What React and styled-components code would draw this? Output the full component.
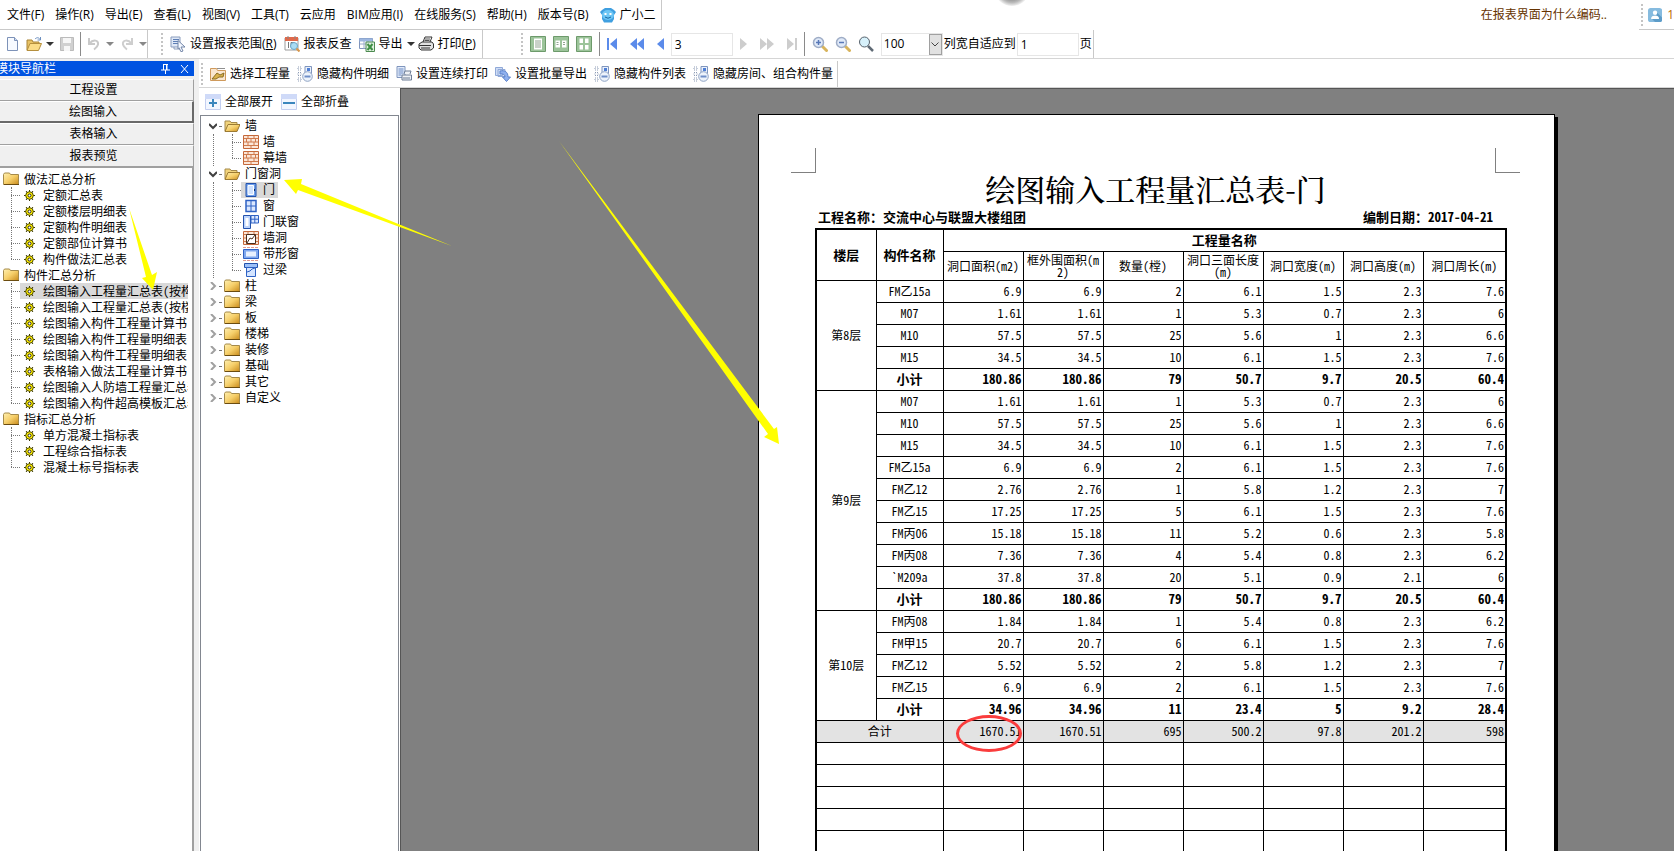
import React from 'react';
import styled, { createGlobalStyle, css } from 'styled-components';

const UI_FONT = '"Open Sans", "Noto Sans CJK SC", sans-serif';
const DOC_FONT = '"Noto Sans Mono CJK SC", "Noto Sans CJK SC", monospace';
const TITLE_FONT = '"Noto Serif CJK SC", "Noto Sans Mono CJK SC", "Noto Sans CJK SC", serif';

const GlobalStyle = createGlobalStyle`
  * { box-sizing: border-box; }
  body { margin: 0; background: #fff; color: #000; font: 12px/16px ${UI_FONT}; }
  button, input, select { font: inherit; color: inherit; }
  ul { margin: 0; padding: 0; list-style: none; }
`;

/* ---------- shell ---------- */

const Shell = styled.div`
  position: relative;
  display: flex;
  flex-direction: column;
  height: 100vh;
  overflow: hidden;
`;

const MenuRow = styled.header`
  position: relative;
  display: flex;
  justify-content: space-between;
  height: 30px;
`;

const MenuBar = styled.nav`
  display: flex;
  align-items: center;
  gap: 11px;
  padding: 0 5px 0 7px;
  border-right: 1px solid #c9c9c9;
  border-bottom: 1px solid #c9c9c9;
`;

const MenuButton = styled.button`
  display: flex;
  align-items: center;
  gap: 4px;
  padding: 0;
  border: 0;
  background: none;
  white-space: nowrap;
`;

const MenuRight = styled.div`
  display: flex;
  gap: 32px;
`;

const Hint = styled.a`
  padding-top: 7px;
  color: #663300;
  text-decoration: none;
  white-space: nowrap;
`;

const Account = styled.div`
  display: flex;
  align-items: center;
  gap: 5px;
  width: 35px;
  padding-left: 2px;
  border-bottom: 1px solid #c9c9c9;
  color: #b86a00;
  overflow: hidden;
`;

const Blob = styled.span`
  position: absolute;
  left: 60%;
  top: -28px;
  width: 36px;
  height: 34px;
  margin-left: -10px;
  border-radius: 50%;
  background: radial-gradient(circle, #777 30%, #bbb 55%, #fff 72%);
`;

const ToolRow = styled.div`
  display: flex;
  height: 29px;
  flex: none;
  border-bottom: 1px solid #d5d5d5;
`;

const ReportToolRow = styled(ToolRow)`
  padding-top: 2px;
`;

const ToolGroup = styled.div`
  display: flex;
  align-items: center;
  padding-left: ${p => p.$start || 0}px;
  padding-right: ${p => p.$end || 0}px;
  gap: ${p => p.$gap || 0}px;
  border-right: 1px solid #c9c9c9;
  margin-right: ${p => p.$after || 0}px;
`;

const ToolCluster = styled.div`
  display: flex;
  align-items: center;
  gap: ${p => p.$gap}px;
`;

const ToolButton = styled.button`
  display: flex;
  align-items: center;
  gap: 4px;
  padding: 0;
  border: 0;
  background: none;
  white-space: nowrap;
  svg { flex: none; }
`;

const Grip = styled.span`
  flex: none;
  width: 2px;
  height: 22px;
  background: repeating-linear-gradient(#c4c4c4 0 2px, transparent 2px 4px);
`;

const Separator = styled.span`
  width: 1px;
  height: 24px;
  background: #8a8a8a;
`;

const NumberBox = styled.input`
  width: 62px;
  height: 23px;
  padding: 0 3px;
  border: 1px solid #e6e6e6;
  background: #fff;
`;

const ComboFrame = styled.span`
  display: flex;
  width: 62px;
  height: 23px;
  border: 1px solid #e6e6e6;
`;

const ComboSelect = styled.select`
  flex: 1;
  min-width: 0;
  padding: 0 2px;
  border: 0;
  background: #fff;
  appearance: none;
`;

const ComboArrow = styled.span`
  display: flex;
  align-items: center;
  justify-content: center;
  width: 13px;
  border: 1px solid #a0a0a0;
  background: #e1e1e1;
`;

const FieldRow = styled.div`
  display: flex;
  align-items: center;
  gap: 1px;
`;

const Field = styled.label`
  display: flex;
  align-items: center;
  gap: 1px;
  white-space: nowrap;
`;

const Workspace = styled.div`
  display: grid;
  grid-template-columns: 194px minmax(0, 1fr);
  gap: 5px;
  flex: 1;
  min-height: 0;
  background: #f0f0f0;
`;

/* ---------- module navigation ---------- */

const NavPanel = styled.aside`
  display: flex;
  flex-direction: column;
  min-height: 0;
  padding-top: 2px;
`;

const NavTitle = styled.div`
  display: flex;
  align-items: center;
  justify-content: space-between;
  height: 15px;
  margin-bottom: 3px;
  padding-right: 5px;
  background: #0053e1;
  color: #fff;
  line-height: 15px;
  overflow: hidden;
`;

const NavName = styled.span`
  margin-left: -4px;
`;

const NavTools = styled.span`
  display: flex;
  gap: 10px;
`;

const NavButton = styled.button`
  flex: none;
  height: 22px;
  padding: 0 6px 0 0;
  border: 1px solid;
  border-left: 0;
  border-color: #fff #a0a0a0 #a0a0a0;
  background: #f0f0f0;
  ${p => p.$active && css`
    border-right: 2px solid #696969;
    border-bottom: 2px solid #696969;
  `}
`;

const NavTree = styled.ul`
  flex: 1;
  min-height: 0;
  padding: 3px 4px 0 3px;
  border-top: 1px solid #a0a0a0;
  border-right: 2px solid #a0a0a0;
  background: #fff;
  font-family: ${DOC_FONT};
  overflow: hidden;
`;

const NavGroup = styled.div`
  display: flex;
  align-items: center;
  gap: 5px;
  height: 16px;
`;

const Branch = styled.ul`
  position: relative;
  padding-left: ${p => p.$indent}px;
  &::before {
    content: '';
    position: absolute;
    left: ${p => p.$indent}px;
    top: 0;
    bottom: 8px;
    border-left: 1px dotted #777;
  }
`;

const NavItem = styled.li`
  display: grid;
  grid-template-columns: 9px minmax(0, 1fr);
  align-items: center;
`;

const NavLabel = styled.span`
  display: flex;
  align-items: center;
  gap: 8px;
  height: 16px;
  padding-left: 4px;
  white-space: nowrap;
  overflow: hidden;
  background: ${p => (p.$selected ? '#d9d9d9' : 'transparent')};
  svg { flex: none; }
`;

const Dots = styled.span`
  border-top: 1px dotted #777;
`;

/* ---------- component tree ---------- */

const Main = styled.div`
  display: flex;
  flex-direction: column;
  min-width: 0;
  min-height: 0;
  background: #fff;
`;

const Content = styled.div`
  display: grid;
  grid-template-columns: 200px minmax(0, 1fr);
  gap: 1px;
  flex: 1;
  min-height: 0;
`;

const TreePane = styled.section`
  display: flex;
  flex-direction: column;
  min-height: 0;
  padding-left: 1px;
`;

const TreeTools = styled.div`
  display: flex;
  align-items: center;
  gap: 8px;
  height: 27px;
  flex: none;
  padding-left: 5px;
`;

const TreeBox = styled.ul`
  flex: 1;
  padding: 2px 0 0 8px;
  border: 1px solid #828790;
  border-bottom: 0;
`;

const TreeNode = styled.li`
  position: relative;
`;

const OuterLine = styled.span`
  position: absolute;
  left: 4px;
  top: 16px;
  bottom: 0;
  border-left: 1px dotted #777;
`;

const TreeRow = styled.div`
  display: grid;
  grid-template-columns: 7px 2px 18px auto;
  justify-content: start;
  align-items: center;
  column-gap: 3px;
  height: 16px;
  white-space: nowrap;
`;

const TreeLeaf = styled.li`
  display: grid;
  grid-template-columns: 9px auto;
  justify-content: start;
  align-items: center;
  height: 16px;
`;

const LeafLabel = styled.span`
  display: flex;
  align-items: center;
  gap: 4px;
  height: 16px;
  padding: 0 3px 0 2px;
  background: ${p => (p.$selected ? '#d9d9d9' : 'transparent')};
`;

/* ---------- report ---------- */

const Viewport = styled.main`
  display: flex;
  justify-content: flex-end;
  min-width: 0;
  padding: 25px 119px 0 0;
  border-top: 1px solid #555;
  border-left: 1px solid #555;
  background: #808080;
  overflow: hidden;
`;

const Paper = styled.article`
  flex: none;
  display: flex;
  flex-direction: column;
  width: 797px;
  min-height: 1120px;
  padding: 33px 50px 0 56px;
  border: 1px solid #000;
  background: #fff;
  box-shadow: 3px 3px 0 #000;
  font: 12px/12px ${DOC_FONT};
`;

const Marks = styled.div`
  display: flex;
  justify-content: space-between;
  margin: 0 -16px 0 -24px;
`;

const Mark = styled.span`
  width: 25px;
  height: 25px;
  border-bottom: 1px solid #808080;
  ${p => (p.$side === 'left' ? 'border-right' : 'border-left')}: 1px solid #808080;
`;

const ReportTitle = styled.h1`
  margin: 0;
  padding-right: 8px;
  font-family: ${TITLE_FONT};
  font-size: 30px;
  line-height: 30px;
  font-weight: 500;
  text-align: center;
`;

const Meta = styled.div`
  display: flex;
  justify-content: space-between;
  padding: 7px 11px 5px 3px;
  font-size: 13px;
  line-height: 13px;
  font-weight: 700;
`;

const Table = styled.table`
  width: 690px;
  table-layout: fixed;
  border-collapse: collapse;
  border: 2px solid #000;
`;

const HeadCell = styled.th`
  height: ${p => (p.$tall ? 29 : 22)}px;
  padding: 0;
  border: 1px solid #000;
  font-size: ${p => (p.$tall ? 12 : 13)}px;
  font-weight: ${p => (p.$tall ? 400 : 700)};
  line-height: 12px;
  word-break: break-all;
`;

const Cell = styled.td`
  position: relative;
  height: 22px;
  padding: 0 1px;
  border: 1px solid #000;
  text-align: ${p => (p.$center ? 'center' : 'right')};
  font-size: ${p => (p.$bold ? 13 : 12)}px;
  font-weight: ${p => (p.$bold ? 700 : 400)};
  background: ${p => (p.$total ? '#e3e3e3' : 'transparent')};
`;

const Ring = styled.span`
  position: absolute;
  left: 12px;
  top: -6px;
  width: 66px;
  height: 37px;
  border: 3px solid #fa3c3c;
  border-radius: 50%;
`;

const Arrows = styled.svg`
  position: absolute;
  left: 0;
  top: 0;
  pointer-events: none;
`;

/* ---------- icons ---------- */

const lens = (
  <>
    <path d="M10.500 10.500l4 4" stroke="#d8b45c" strokeWidth="3" strokeLinecap="round" />
    <circle cx="6.500" cy="6.500" r="5" fill="#dfe9f8" stroke="#9fadc6" strokeWidth="1.500" />
  </>
);

const hideIcon = (
  <>
    <path d="M1 1h3v3H1zM1 6.500h3v3H1zM1 12h3v3H1z" fill="none" stroke="#8c9bb5" strokeDasharray="1 1" />
    <path d="M8 .5h6.500v7H8z" fill="#eaf1fc" stroke="#7f95bd" />
    <path d="M10 2h3v3h-3z" fill="#4f7fd6" />
    <circle cx="10.500" cy="10.500" r="4.800" fill="#edf3fb" stroke="#8fa3c4" />
    <path d="M7.500 10.500h6" stroke="#6f8fc8" strokeWidth="2" />
  </>
);

const viewBase = <path d="M.5.500h15v15H.500z" fill="#9cc49a" stroke="#6d9a6b" />;
const brick = (
  <>
    <path d="M.5 1.500h15v13H.500z" fill="#fbe6d8" stroke="#c4683a" />
    <path d="M1 4.500h14M1 8h14M1 11.500h14M5 2v2.500M11 2v2.500M8 4.500V8M3.500 4.500V8M12.500 4.500V8M5 8v3.500M11 8v3.500M8 11.500v3" stroke="#cf7a4c" />
  </>
);

const ART = {
  file: <><path d="M2.500 1.500h7l3 3v10h-10z" fill="#f7faff" stroke="#7d92b8" /><path d="M9.500 1.500v3h3" fill="#cfdcf2" stroke="#7d92b8" /></>,
  open: <><path d="M1 14V4h5l1 2h6v3" fill="#e8c265" stroke="#a98436" /><path d="M1 14.500l3-7h11.500l-3 7z" fill="#fbdc87" stroke="#b58f3d" /><path d="M9 3c2-2 4-1.500 5 .5M14.500 1v3h-3" fill="none" stroke="#6b8fc0" /></>,
  save: <><path d="M1.500 1.500h13v13h-13z" fill="#d0d0d0" stroke="#bbb" /><path d="M4 2h8v5H4zM5 10h6v5H5z" fill="#f6f6f6" /></>,
  undo: <path d="M3 2v6h6M3.500 7.500C7 3 13 4 12 8.500c-.5 2.500-2 3.500-4 5" fill="none" stroke="#c9c9c9" strokeWidth="2" />,
  redo: <path d="M13 2v6H7M12.500 7.500C9 3 3 4 4 8.500c.5 2.500 2 3.500 4 5" fill="none" stroke="#cecece" strokeWidth="2" />,
  range: <><path d="M1 1h9v10H1z" fill="#dfe8f7" stroke="#8b9dbd" /><path d="M3 3.500h6M3 5.500h6M3 7.500h6" stroke="#5e7fb5" /><path d="M4 11v2h6" fill="none" stroke="#8b9dbd" /><path d="M8 4.500l7 6.500h-4l2 4-2 .8-2-4-1 1z" fill="#f4f8ff" stroke="#7386a8" /></>,
  check: <><path d="M1 2h13v12H1z" fill="#fff" stroke="#9b9b9b" /><path d="M1 1h13v4H1z" fill="#e0694a" /><path d="M4 0v3M11 0v3" stroke="#888" /><path d="M4.500 6v6M7 6.500h3v5H7z" fill="none" stroke="#777" /><circle cx="10" cy="10" r="3.500" fill="#a9dcf4" stroke="#6ba8c9" /><path d="M12.500 12.500l3 3" stroke="#d8974b" strokeWidth="2" /></>,
  excel: <><path d="M.5 2.500h13v10H.500z" fill="#fff" stroke="#7f95bd" /><path d="M.5 2.500h13v3H.500z" fill="#9db7e0" /><path d="M1 8h12M5 5v8M9 5v8" stroke="#9aabc9" /><path d="M7 6h8.500v9.500H7z" fill="#dff0df" stroke="#4d8a50" /><path d="M8.500 8l5 6M13.500 8l-5 6" stroke="#3f8f45" strokeWidth="2" /></>,
  print: <><path d="M5 6l2-5h7l-2 5" fill="#fff" stroke="#333" /><path d="M7 3h5M6.500 4.500h5" stroke="#555" /><path d="M1 8l3-2h10l1.500 2v4l-2.500 2H3l-2-2z" fill="#e2e2e2" stroke="#333" /><path d="M1 9.500h12M3 12h9" stroke="#333" /></>,
  view1: <>{viewBase}<path d="M4 2.500h8v11H4z" fill="#fff" /><path d="M5 5h6M5 7h6M5 9h6M5 11h6" stroke="#93a593" /></>,
  view2: <>{viewBase}<path d="M2.500 4.500h4.500v7H2.500zM9 4.500h4.500v7H9z" fill="#fff" /><path d="M3.500 6.500h2M3.500 8.500h2M10 6.500h2M10 8.500h2" stroke="#93a593" /></>,
  view4: <>{viewBase}<path d="M3.500 2.500h3.500v4.500H3.500zM9 2.500h3.500v4.500H9zM3.500 9h3.500v4.500H3.500zM9 9h3.500v4.500H9z" fill="#fff" /></>,
  zoomIn: <>{lens}<path d="M4 6.500h5M6.500 4v5" stroke="#5878b8" strokeWidth="1.500" /></>,
  zoomOut: <>{lens}<path d="M4 6.500h5" stroke="#5878b8" strokeWidth="1.500" /></>,
  zoomAny: <><path d="M10 10l5 5" stroke="#5f6a75" strokeWidth="2.500" /><circle cx="6.500" cy="6" r="5" fill="#d7f1fb" stroke="#56616b" /></>,
  pick: <><path d="M.5 2.500h6l1 2h8v10H.500z" fill="#f9e6cf" stroke="#cf9a5c" /><path d="M7 2.500h8" stroke="#8f8f8f" /><path d="M2 13l5-6 3 2 4-2-1 4H9l-3 2z" fill="#d9b24d" stroke="#8a6d23" /></>,
  hide: hideIcon,
  series: <><path d="M1 .5h8v11H1z" fill="#e2ebfa" stroke="#7f95bd" /><path d="M2.500 3h5M2.500 5h5M2.500 7h5M2.500 9h3" stroke="#6d8cc4" /><path d="M8 8l1-3h6l-1 3M6 9h9.500v5H6z" fill="#eef1f5" stroke="#6d7d95" /><path d="M7 12h7" stroke="#6d7d95" /></>,
  batch: <><path d="M.5 1.500h7v8h-7zM3 3.500h7v7H3z" fill="#cfddf6" stroke="#90a9d8" /><path d="M5 5c5-1 8 1 8 6h2.500L11.500 15.500 7.500 11H10c0-2.500-2-3.500-5-3z" fill="#8fb0ee" stroke="#5d84cc" /></>,
  plus: <><path d="M.5.500h15v15H.500z" fill="#f2f6ff" stroke="#c4cff0" /><path d="M0 0h16v5H0z" fill="#cfdaf8" /><path d="M4 9h8M8 5v8" stroke="#3a86bd" strokeWidth="2" /></>,
  minus: <><path d="M.5.500h15v15H.500z" fill="#f2f6ff" stroke="#c4cff0" /><path d="M0 0h16v5H0z" fill="#cfdaf8" /><path d="M2 9h12" stroke="#3a86bd" strokeWidth="2" /></>,
  robot: <><path d="M0 5l2-2 3-2h6l3 2 2 2-2 3 0 4-2 3.500H4L2 12V8z" fill="#3f9fe0" /><ellipse cx="8" cy="8" rx="6" ry="5" fill="#6cc6f5" /><path d="M5.500 6v2M10.500 6v2" stroke="#fff" strokeWidth="2" /><path d="M5 10q3 2.500 6 0" fill="none" stroke="#1769a3" /></>,
  user: <><rect width="16" height="16" rx="3" fill="#86bbdf" /><path d="M9 4l7 7v2c0 2-1 3-3 3H8l-4-4z" fill="#5d9cc8" /><circle cx="8" cy="5.500" r="2.500" fill="#fff" /><path d="M3.500 12.500c0-3 2-4 4.500-4s4.500 1 4.500 4z" fill="#fff" /></>,
  folder: <><path d="M.5 13.500v-10l1-1.500h5l1 1.500h8v10z" fill="url(#gold)" stroke="#a58a4a" /><path d="M1 13.500h15" stroke="#6b4c10" /></>,
  folderOpen: <><path d="M1 13V3h5l1 1.500h6V7" fill="#f2d47c" stroke="#a58a4a" /><path d="M1 13.500l3-7h12l-3 7z" fill="url(#gold)" stroke="#9b7a33" /></>,
  gear: <><path d="M5.500 0v11M0 5.500h11M2 1l7 9M9 1l-7 9" stroke="#3d3b00" /><circle cx="5.500" cy="5.500" r="3.800" fill="#ffee00" stroke="#4d4a00" /><circle cx="5.500" cy="5.500" r="1.500" fill="#fff" stroke="#222" /></>,
  brick,
  door: <><path d="M3 1.500h10v13H3z" fill="#6f9fea" stroke="#2352ad" /><path d="M5 3.500h5.500v9H5z" fill="#cfe2ff" stroke="#fff" /><path d="M11 8h1" stroke="#10306f" strokeWidth="2" /></>,
  window: <><path d="M3 2.500h10v11H3z" fill="#dbe8ff" stroke="#2f62c4" strokeWidth="1.500" /><path d="M8 2v12M3 8h10" stroke="#2f62c4" /></>,
  doorWindow: <><path d="M.5 1.500h7v13h-7z" fill="#bcd4fb" stroke="#2352ad" /><path d="M2.500 4h3v8h-3z" fill="#fff" /><path d="M8 1.500h7.500V9H8z" fill="#dbe8ff" stroke="#2f62c4" /><path d="M11.800 1.500V9M8 5.200h7.500" stroke="#2f62c4" /></>,
  hole: <>{brick}<path d="M3.500 4.500h9v9h-9z" fill="#fff" stroke="#4b2d1b" /><path d="M4 13l3-5 2 1 3-4" fill="none" stroke="#4b2d1b" /></>,
  strip: <><path d="M0 1.500h16M0 14.500h16" stroke="#e39a8e" strokeDasharray="3 1" /><path d="M.5 3.500h15v9H.500z" fill="#7fa8ee" stroke="#2f62c4" /><path d="M3 5.500h10v5H3z" fill="#e8f1ff" /></>,
  lintel: <><path d="M1.500 1.500h13v4h-13z" fill="#9cc0f8" stroke="#2352ad" /><path d="M3.500 5.500h9v9h-9z" fill="#d5e5ff" stroke="#2f62c4" /><path d="M4 10l3-1 2-2 3-1" fill="none" stroke="#2f62c4" /></>,
};

const Icon = ({ name, size = 16 }) => (
  <svg width={size} height={size} viewBox={`0 0 ${size} ${size}`} aria-hidden="true">
    <defs>
      <linearGradient id="gold" x1="0" y1="0" x2="1" y2="1">
        <stop offset="0" stopColor="#fff0b0" />
        <stop offset="0.500" stopColor="#f6cf6a" />
        <stop offset="1" stopColor="#c98b1c" />
      </linearGradient>
    </defs>
    {ART[name]}
  </svg>
);

const Caret = ({ color = '#333' }) => (
  <svg width="8" height="4" viewBox="0 0 8 4" aria-hidden="true"><path d="M0 0h8L4 4z" fill={color} /></svg>
);

const PAGER = {
  first: [10, 'M0 0h2v12H0zM10 0v12L3 6z'],
  back: [14, 'M7 0v12L0 6zM14 0v12L7 6z'],
  prev: [7, 'M7 0v12L0 6z'],
  next: [7, 'M0 0v12l7-6z'],
  forward: [14, 'M0 0v12l7-6zM7 0v12l7-6z'],
  last: [10, 'M0 0v12l7-6zM8 0h2v12H8z'],
};

const PagerButton = ({ kind, label, muted }) => (
  <ToolButton aria-label={label}>
    <svg width={PAGER[kind][0]} height="12" viewBox={`0 0 ${PAGER[kind][0]} 12`}>
      <path d={PAGER[kind][1]} fill={muted ? '#cdcdcd' : '#5b8bea'} />
    </svg>
  </ToolButton>
);

const Chevron = ({ open }) => (
  <svg width="8" height="8" viewBox="0 0 8 8" aria-hidden="true">
    <path d={open ? 'M0 2L4 6 8 2' : 'M2 0L6 4 2 8'} fill="none" stroke={open ? '#404040' : '#a0a0a0'} strokeWidth="2" />
  </svg>
);

/* ---------- data ---------- */

const MENUS = ['文件(F)', '操作(R)', '导出(E)', '查看(L)', '视图(V)', '工具(T)', '云应用', 'BIM应用(I)', '在线服务(S)', '帮助(H)', '版本号(B)'];

const REPORT_TOOLS = [
  ['pick', '选择工程量'],
  ['hide', '隐藏构件明细'],
  ['series', '设置连续打印'],
  ['batch', '设置批量导出'],
  ['hide', '隐藏构件列表'],
  ['hide', '隐藏房间、组合构件量'],
];

const NAV_GROUPS = [
  ['做法汇总分析', ['定额汇总表', '定额楼层明细表', '定额构件明细表', '定额部位计算书', '构件做法汇总表']],
  ['构件汇总分析', ['绘图输入工程量汇总表(按构', '绘图输入工程量汇总表(按楼', '绘图输入构件工程量计算书', '绘图输入构件工程量明细表-', '绘图输入构件工程量明细表.', '表格输入做法工程量计算书', '绘图输入人防墙工程量汇总表', '绘图输入构件超高模板汇总表']],
  ['指标汇总分析', ['单方混凝土指标表', '工程综合指标表', '混凝土标号指标表']],
];

const TREE = [
  ['墙', [['brick', '墙'], ['brick', '幕墙']]],
  ['门窗洞', [['door', '门'], ['window', '窗'], ['doorWindow', '门联窗'], ['hole', '墙洞'], ['strip', '带形窗'], ['lintel', '过梁']]],
  ['柱'], ['梁'], ['板'], ['楼梯'], ['装修'], ['基础'], ['其它'], ['自定义'],
];

const COLUMNS = ['洞口面积(m2)', '框外围面积(m2)', '数量(樘)', '洞口三面长度(m)', '洞口宽度(m)', '洞口高度(m)', '洞口周长(m)'];
const WIDTHS = [60, 67, 80, 80, 80, 80, 80, 80, 83];

const FLOORS = [
  ['第8层', [
    ['FM乙15a', '6.9', '6.9', '2', '6.1', '1.5', '2.3', '7.6'],
    ['M07', '1.61', '1.61', '1', '5.3', '0.7', '2.3', '6'],
    ['M10', '57.5', '57.5', '25', '5.6', '1', '2.3', '6.6'],
    ['M15', '34.5', '34.5', '10', '6.1', '1.5', '2.3', '7.6'],
    ['小计', '180.86', '180.86', '79', '50.7', '9.7', '20.5', '60.4'],
  ]],
  ['第9层', [
    ['M07', '1.61', '1.61', '1', '5.3', '0.7', '2.3', '6'],
    ['M10', '57.5', '57.5', '25', '5.6', '1', '2.3', '6.6'],
    ['M15', '34.5', '34.5', '10', '6.1', '1.5', '2.3', '7.6'],
    ['FM乙15a', '6.9', '6.9', '2', '6.1', '1.5', '2.3', '7.6'],
    ['FM乙12', '2.76', '2.76', '1', '5.8', '1.2', '2.3', '7'],
    ['FM乙15', '17.25', '17.25', '5', '6.1', '1.5', '2.3', '7.6'],
    ['FM丙06', '15.18', '15.18', '11', '5.2', '0.6', '2.3', '5.8'],
    ['FM丙08', '7.36', '7.36', '4', '5.4', '0.8', '2.3', '6.2'],
    ['`M209a', '37.8', '37.8', '20', '5.1', '0.9', '2.1', '6'],
    ['小计', '180.86', '180.86', '79', '50.7', '9.7', '20.5', '60.4'],
  ]],
  ['第10层', [
    ['FM丙08', '1.84', '1.84', '1', '5.4', '0.8', '2.3', '6.2'],
    ['FM甲15', '20.7', '20.7', '6', '6.1', '1.5', '2.3', '7.6'],
    ['FM乙12', '5.52', '5.52', '2', '5.8', '1.2', '2.3', '7'],
    ['FM乙15', '6.9', '6.9', '2', '6.1', '1.5', '2.3', '7.6'],
    ['小计', '34.96', '34.96', '11', '23.4', '5', '9.2', '28.4'],
  ]],
];
const TOTALS = ['1670.51', '1670.51', '695', '500.2', '97.8', '201.2', '598'];
const BLANK_ROWS = [0, 1, 2, 3, 4, 5];

/* ---------- sections ---------- */

const Menu = () => (
  <MenuRow>
    <MenuBar>
      {MENUS.map(m => <MenuButton key={m}>{m}</MenuButton>)}
      <MenuButton><Icon name="robot" />广小二</MenuButton>
    </MenuBar>
    <Blob />
    <MenuRight>
      <Hint href="#help">在报表界面为什么编码..</Hint>
      <Account><Grip /><Icon name="user" />1</Account>
    </MenuRight>
  </MenuRow>
);

const Toolbar = () => (
  <ToolRow>
    <ToolGroup $start={5} $gap={5} $after={13}>
      <ToolButton aria-label="新建"><Icon name="file" /></ToolButton>
      <ToolButton aria-label="打开"><Icon name="open" /><Caret /></ToolButton>
      <ToolButton aria-label="保存"><Icon name="save" /></ToolButton>
      <Separator />
      <ToolButton aria-label="撤销"><Icon name="undo" /><Caret color="#888" /></ToolButton>
      <ToolButton aria-label="重做"><Icon name="redo" /><Caret color="#888" /></ToolButton>
    </ToolGroup>
    <ToolGroup $gap={7} $end={6} $after={38}>
      <Grip />
      <ToolButton><Icon name="range" /><span>设置报表范围(<u>R</u>)</span></ToolButton>
      <ToolButton><Icon name="check" />报表反查</ToolButton>
      <ToolCluster $gap={3}>
        <ToolButton><Icon name="excel" />导出<Caret /></ToolButton>
        <ToolButton><Icon name="print" /><span>打印(<u>P</u>)</span></ToolButton>
      </ToolCluster>
    </ToolGroup>
    <ToolGroup $gap={7} $end={1}>
      <Grip />
      <ToolButton aria-label="单页"><Icon name="view1" /></ToolButton>
      <ToolButton aria-label="双页"><Icon name="view2" /></ToolButton>
      <ToolButton aria-label="四页"><Icon name="view4" /></ToolButton>
      <Separator />
      <ToolCluster $gap={13}>
        <PagerButton kind="first" label="首页" />
        <PagerButton kind="back" label="后退" />
        <PagerButton kind="prev" label="上一页" />
      </ToolCluster>
      <NumberBox aria-label="页码" defaultValue="3" />
      <ToolCluster $gap={13}>
        <PagerButton kind="next" label="下一页" muted />
        <PagerButton kind="forward" label="前进" muted />
        <PagerButton kind="last" label="末页" muted />
      </ToolCluster>
      <Separator />
      <ToolButton aria-label="放大"><Icon name="zoomIn" /></ToolButton>
      <ToolButton aria-label="缩小"><Icon name="zoomOut" /></ToolButton>
      <ToolButton aria-label="缩放"><Icon name="zoomAny" /></ToolButton>
      <FieldRow>
        <ComboFrame>
          <ComboSelect aria-label="显示比例" defaultValue="100">
            <option>100</option>
            <option>75</option>
          </ComboSelect>
          <ComboArrow>
            <svg width="8" height="5" viewBox="0 0 8 5"><path d="M.5.500L4 4 7.500.500" fill="none" stroke="#444" /></svg>
          </ComboArrow>
        </ComboFrame>
        <Field>列宽自适应到<NumberBox defaultValue="1" />页</Field>
      </FieldRow>
    </ToolGroup>
  </ToolRow>
);

const ModuleNav = () => (
  <NavPanel>
    <NavTitle>
      <NavName>模块导航栏</NavName>
      <NavTools>
        <svg width="9" height="10" viewBox="0 0 9 10"><path d="M2 .5h5M2.500 0v6M6 0v6M5.500 0v6M0 6h9M4.500 6v4" stroke="#fff" fill="none" /></svg>
        <svg width="9" height="10" viewBox="0 0 9 10"><path d="M1 1l7 8M8 1L1 9" stroke="#fff" /></svg>
      </NavTools>
    </NavTitle>
    <NavButton>工程设置</NavButton>
    <NavButton $active>绘图输入</NavButton>
    <NavButton>表格输入</NavButton>
    <NavButton>报表预览</NavButton>
    <NavTree>
      {NAV_GROUPS.map(([group, items], g) => (
        <li key={group}>
          <NavGroup><Icon name="folder" />{group}</NavGroup>
          <Branch $indent={8}>
            {items.map((item, i) => (
              <NavItem key={item}>
                <Dots />
                <NavLabel $selected={g === 1 && i === 0}><Icon name="gear" size={11} />{item}</NavLabel>
              </NavItem>
            ))}
          </Branch>
        </li>
      ))}
    </NavTree>
  </NavPanel>
);

const ComponentTree = () => (
  <TreePane>
    <TreeTools>
      <ToolButton><Icon name="plus" />全部展开</ToolButton>
      <ToolButton><Icon name="minus" />全部折叠</ToolButton>
    </TreeTools>
    <TreeBox>
      {TREE.map(([name, leaves]) => (
        <TreeNode key={name}>
          <TreeRow>
            <Chevron open={!!leaves} />
            <Dots />
            <Icon name={leaves ? 'folderOpen' : 'folder'} />
            <span>{name}</span>
          </TreeRow>
          {leaves && (
            <>
              <OuterLine />
              <Branch $indent={23}>
                {leaves.map(([icon, leaf]) => (
                  <TreeLeaf key={leaf}>
                    <Dots />
                    <LeafLabel $selected={leaf === '门'}><Icon name={icon} />{leaf}</LeafLabel>
                  </TreeLeaf>
                ))}
              </Branch>
            </>
          )}
        </TreeNode>
      ))}
    </TreeBox>
  </TreePane>
);

const Report = () => (
  <Paper>
    <Marks><Mark $side="left" /><Mark $side="right" /></Marks>
    <ReportTitle>绘图输入工程量汇总表-门</ReportTitle>
    <Meta>
      <span>工程名称：交流中心与联盟大楼组团</span>
      <span>编制日期：2017-04-21</span>
    </Meta>
    <Table>
      <colgroup>{WIDTHS.map((w, i) => <col key={i} width={w} />)}</colgroup>
      <thead>
        <tr>
          <HeadCell rowSpan={2}>楼层</HeadCell>
          <HeadCell rowSpan={2}>构件名称</HeadCell>
          <HeadCell colSpan={7}>工程量名称</HeadCell>
        </tr>
        <tr>{COLUMNS.map(c => <HeadCell key={c} $tall>{c}</HeadCell>)}</tr>
      </thead>
      <tbody>
        {FLOORS.map(([floor, rows]) => rows.map((row, r) => (
          <tr key={floor + r}>
            {r === 0 && <Cell $center rowSpan={rows.length}>{floor}</Cell>}
            {row.map((v, c) => <Cell key={c} $center={c === 0} $bold={row[0] === '小计'}>{v}</Cell>)}
          </tr>
        )))}
        <tr>
          <Cell $center $total colSpan={2}>合计</Cell>
          {TOTALS.map((v, i) => <Cell key={i} $total>{v}{i === 0 && <Ring />}</Cell>)}
        </tr>
        {BLANK_ROWS.map(r => (
          <tr key={r}>
            <Cell colSpan={2} />
            {TOTALS.map((_, i) => <Cell key={i} />)}
          </tr>
        ))}
      </tbody>
    </Table>
  </Paper>
);

export default function App() {
  return (
    <Shell>
      <GlobalStyle />
      <Menu />
      <Toolbar />
      <Workspace>
        <ModuleNav />
        <Main>
          <ReportToolRow>
            <ToolGroup $start={2} $gap={7} $end={4}>
              <Grip />
              {REPORT_TOOLS.map(([icon, label]) => <ToolButton key={label}><Icon name={icon} />{label}</ToolButton>)}
            </ToolGroup>
          </ReportToolRow>
          <Content>
            <ComponentTree />
            <Viewport><Report /></Viewport>
          </Content>
        </Main>
      </Workspace>
      <Arrows width="800" height="460" viewBox="0 0 800 460" fill="#ffff00" aria-hidden="true">
        <path d="M129 208L152 275l5-3-4 18-11-12 4-1z" />
        <path d="M452 246L301 184l1-5-18 1 12 14 2-4z" />
        <path d="M559 141L774 429l3-2 2 17-15-7 4-3z" />
      </Arrows>
    </Shell>
  );
}
